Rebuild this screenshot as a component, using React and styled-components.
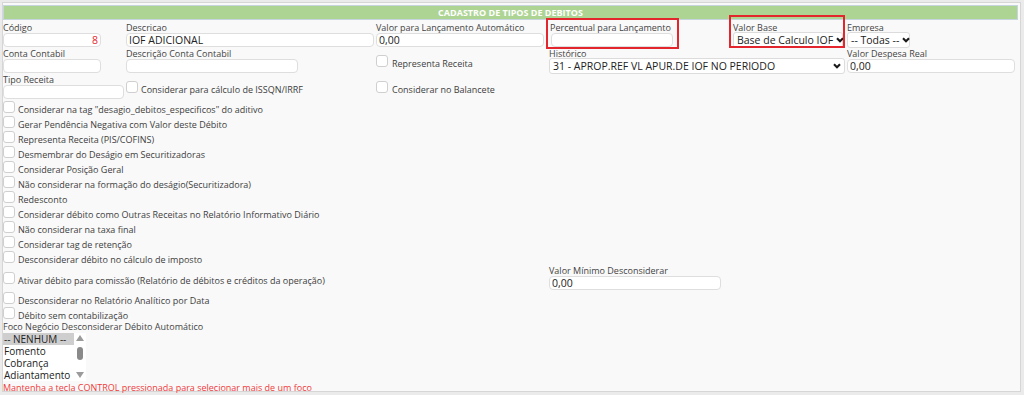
import styled, { createGlobalStyle } from 'styled-components';

const GlobalStyle = createGlobalStyle`
  body {
    margin: 0;
    background: #ebebeb;
    font-family: "Open Sans", "Liberation Sans", sans-serif;
  }
  * {
    box-sizing: border-box;
  }
`;

const Page = styled.div`
  padding: 2px;
`;

const Panel = styled.section`
  width: 1019px;
  height: 390px;
  background: #f9f9f9;
  border: 1px solid #d6d6d6;
  padding: 2px 2px 0 0;
`;

const Header = styled.h1`
  margin: 0;
  height: 15px;
  background: #aed494;
  border: 1px solid #c6d4de;
  color: #fff;
  font-size: 9px;
  font-weight: 700;
  line-height: 13px;
  text-align: center;
`;

const FormGrid = styled.div`
  margin-top: 2px;
  display: grid;
  grid-template-columns: 121px 248px 171px 182px 112px 1fr;
  column-gap: 2px;
  align-items: start;
`;

const Field = styled.div`
  display: flex;
  flex-direction: column;
  align-items: flex-start;
  padding-bottom: 1px;
  grid-column: ${(p) => p.$span || 'auto'};
`;

const Label = styled.label`
  font-size: 9px;
  line-height: 11px;
  color: #444;
  white-space: nowrap;
`;

const TextInput = styled.input`
  width: ${(p) => p.$width || '100%'};
  height: 14px;
  border: 1px solid #dedede;
  border-radius: 4px;
  background: #fff;
  padding: 0 2px;
  font-family: "Open Sans", sans-serif;
  font-size: 10.5px;
  color: ${(p) => p.$color || '#222'};
  text-align: ${(p) => p.$align || 'left'};
  outline: none;
`;

const SelectBox = styled.div`
  width: ${(p) => p.$width || '100%'};
  height: 16px;
  margin-top: -1px;
  margin-bottom: -1px;
  display: flex;
  align-items: center;
  justify-content: space-between;
  gap: 3px;
  border: 1px solid #dcdcdc;
  border-radius: 3px;
  background: #fff;
  padding: 0 3px;
  font-size: 10.5px;
  color: #222;
  white-space: nowrap;

  svg {
    flex-shrink: 0;
  }
`;

const Highlight = styled.div`
  position: relative;
  display: inline-flex;
  flex-direction: column;

  &::after {
    content: '';
    position: absolute;
    top: ${(p) => p.$top}px;
    left: ${(p) => p.$left}px;
    right: ${(p) => p.$right}px;
    bottom: ${(p) => p.$bottom}px;
    border: 2px solid #e3262d;
    pointer-events: none;
  }
`;

const CheckRow = styled.div`
  grid-column: ${(p) => p.$span || 'auto'};
  align-self: center;
  height: 15px;
  display: flex;
  gap: ${(p) => p.$gap || 3}px;
`;

const Box = styled.span`
  width: 12px;
  height: 12px;
  margin-top: 1px;
  flex-shrink: 0;
  background: #fff;
  border: 1px solid #cfcfcf;
  border-radius: 3px;
`;

const CheckText = styled.span`
  align-self: flex-end;
  font-size: 9px;
  line-height: 10px;
  color: #404040;
  white-space: nowrap;
`;

const Bottom = styled.div`
  display: flex;
  flex-direction: column;
  align-items: flex-start;
`;

const ListBox = styled.div`
  margin-top: 1px;
  width: 83px;
  height: 48px;
  display: flex;
  background: #fff;
`;

const Options = styled.div`
  flex: 1;
  display: flex;
  flex-direction: column;
`;

const Option = styled.div`
  height: 12px;
  line-height: 12px;
  font-size: 10px;
  color: #222;
  padding-left: 1px;
  white-space: nowrap;
  background: ${(p) => (p.$selected ? '#cecece' : 'transparent')};
`;

const ScrollTrack = styled.div`
  width: 12px;
  display: flex;
  flex-direction: column;
  align-items: center;
  padding: 2px 0 3px;
`;

const Thumb = styled.div`
  width: 6px;
  height: 13px;
  margin-top: 6px;
  border-radius: 3px;
  background: #8a8a8a;
`;

const Spacer = styled.div`
  flex: 1;
`;

const Note = styled.p`
  margin: 1px 0 0;
  font-size: 9px;
  line-height: 11px;
  color: #f03a3a;
`;

function Chevron() {
  return (
    <svg width="8" height="6" viewBox="0 0 8 6">
      <path d="M1 1.3 L4 4.3 L7 1.3" fill="none" stroke="#1a1a1a" strokeWidth="2.1" />
    </svg>
  );
}

function Arrow({ down }) {
  return (
    <svg width="8" height="6" viewBox="0 0 8 6">
      <polygon points={down ? '0,0 8,0 4,6' : '0,6 8,6 4,0'} fill="#9b9b9b" />
    </svg>
  );
}

function Check({ label, span, gap }) {
  return (
    <CheckRow $span={span} $gap={gap}>
      <Box />
      <CheckText>{label}</CheckText>
    </CheckRow>
  );
}

const checks = [
  'Considerar na tag "desagio_debitos_especificos" do aditivo',
  'Gerar Pendência Negativa com Valor deste Débito',
  'Representa Receita (PIS/COFINS)',
  'Desmembrar do Deságio em Securitizadoras',
  'Considerar Posição Geral',
  'Não considerar na formação do deságio(Securitizadora)',
  'Redesconto',
  'Considerar débito como Outras Receitas no Relatório Informativo Diário',
  'Não considerar na taxa final',
  'Considerar tag de retenção',
  'Desconsiderar débito no cálculo de imposto',
];

const focos = ['-- NENHUM --', 'Fomento', 'Cobrança', 'Adiantamento'];

export default function App() {
  return (
    <Page>
      <GlobalStyle />
      <Panel>
        <Header>CADASTRO DE TIPOS DE DEBITOS</Header>
        <FormGrid>
          <Field>
            <Label>Código</Label>
            <TextInput $width="98px" $align="right" $color="#e8262c" defaultValue="8" />
          </Field>
          <Field>
            <Label>Descricao</Label>
            <TextInput defaultValue="IOF ADICIONAL" />
          </Field>
          <Field>
            <Label>Valor para Lançamento Automático</Label>
            <TextInput $width="168px" defaultValue="0,00" />
          </Field>
          <Field>
            <Highlight $top={-4} $left={-3} $right={-6} $bottom={-2}>
              <Label style={{ paddingLeft: 1 }}>Percentual para Lançamento</Label>
              <TextInput $width="122px" style={{ marginLeft: 2 }} />
            </Highlight>
          </Field>
          <Field>
            <Highlight $top={-7} $left={-4} $right={-2} $bottom={-1}>
              <Label>Valor Base</Label>
              <SelectBox $width="110px">
                Base de Calculo IOF <Chevron />
              </SelectBox>
            </Highlight>
          </Field>
          <Field>
            <Label>Empresa</Label>
            <SelectBox $width="63px">
              -- Todas -- <Chevron />
            </SelectBox>
          </Field>

          <Field>
            <Label>Conta Contabil</Label>
            <TextInput $width="98px" />
          </Field>
          <Field>
            <Label>Descrição Conta Contabil</Label>
            <TextInput $width="172px" />
          </Field>
          <Check label="Representa Receita" gap={4} />
          <Field $span="4 / 6">
            <Label>Histórico</Label>
            <SelectBox $width="296px">
              31 - APROP.REF VL APUR.DE IOF NO PERIODO <Chevron />
            </SelectBox>
          </Field>
          <Field>
            <Label>Valor Despesa Real</Label>
            <TextInput $width="168px" defaultValue="0,00" />
          </Field>

          <Field>
            <Label>Tipo Receita</Label>
            <TextInput />
          </Field>
          <Check label="Considerar para cálculo de ISSQN/IRRF" />
          <Check label="Considerar no Balancete" gap={4} />

          {checks.map((c) => (
            <Check key={c} label={c} span="1 / 4" />
          ))}
          <Check label="Ativar débito para comissão (Relatório de débitos e créditos da operação)" span="1 / 4" />
          <Field $span="4 / 6">
            <Label>Valor Mínimo Desconsiderar</Label>
            <TextInput $width="172px" defaultValue="0,00" />
          </Field>
          <Check label="Desconsiderar no Relatório Analítico por Data" span="1 / 4" />
          <Check label="Débito sem contabilização" span="1 / 4" />
        </FormGrid>

        <Bottom>
          <Label>Foco Negócio Desconsiderar Débito Automático</Label>
          <ListBox>
            <Options>
              {focos.map((f, i) => (
                <Option key={f} $selected={i === 0}>
                  {f}
                </Option>
              ))}
            </Options>
            <ScrollTrack>
              <Arrow />
              <Thumb />
              <Spacer />
              <Arrow down />
            </ScrollTrack>
          </ListBox>
          <Note>Mantenha a tecla CONTROL pressionada para selecionar mais de um foco</Note>
        </Bottom>
      </Panel>
    </Page>
  );
}
